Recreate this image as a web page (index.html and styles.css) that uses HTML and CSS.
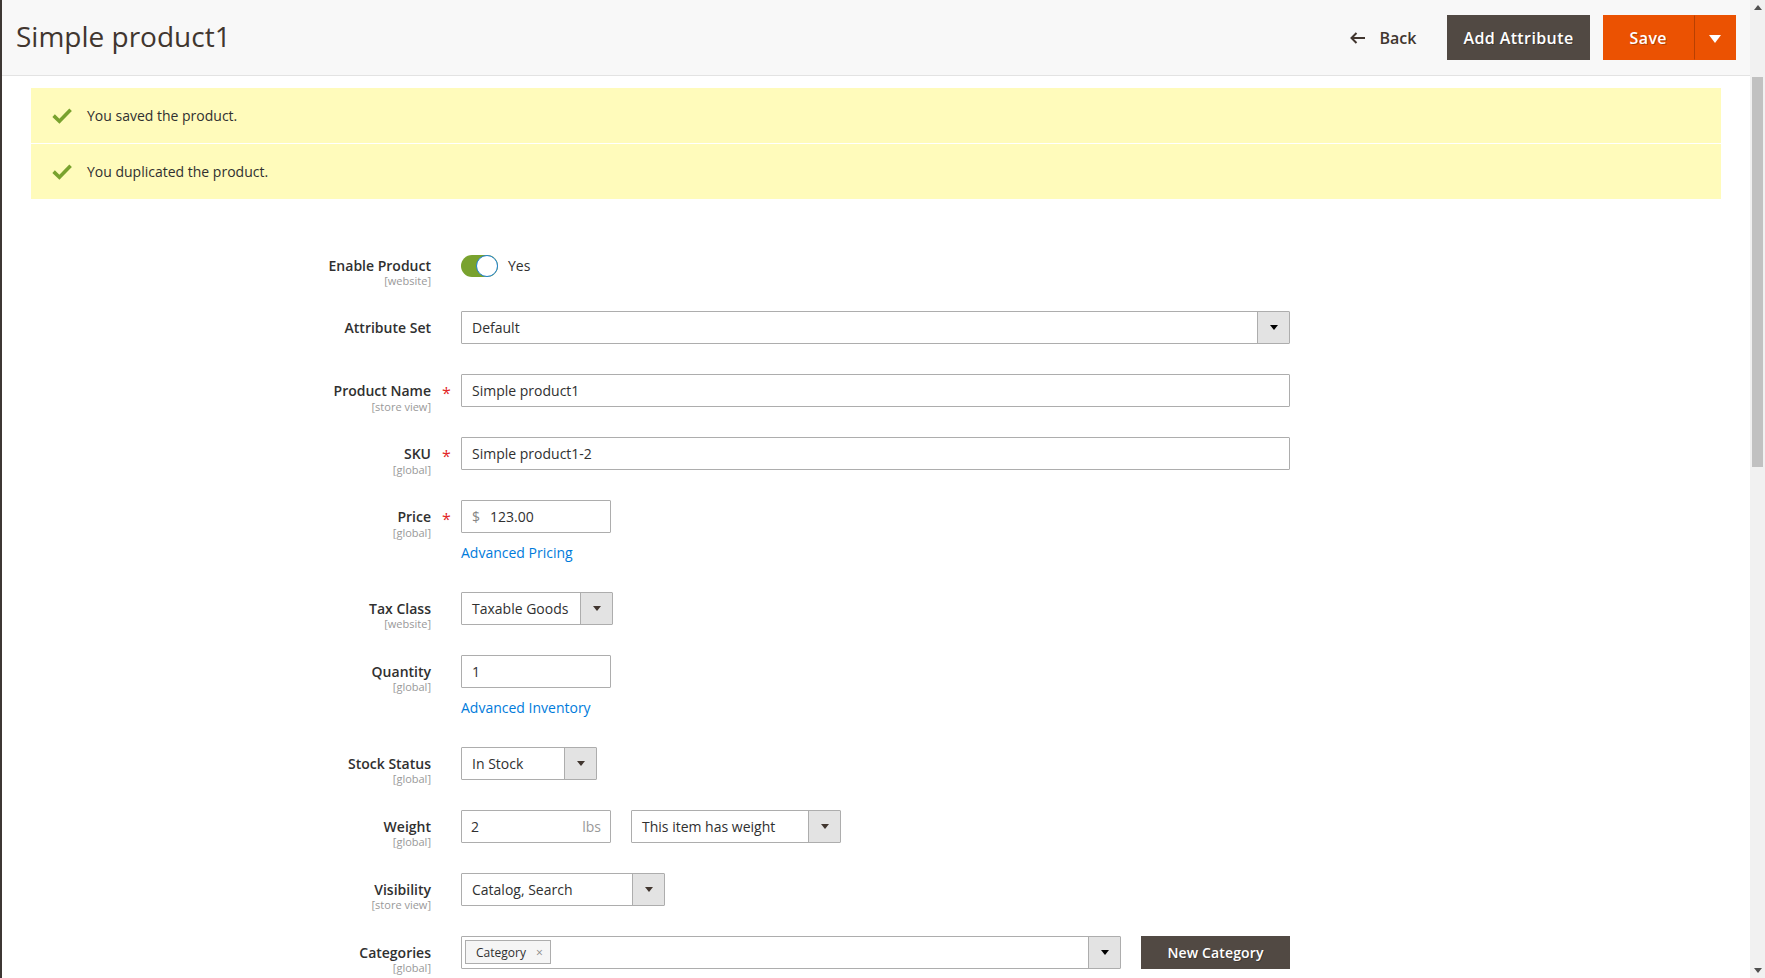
FILE: index.html
```html
<!DOCTYPE html>
<html lang="en">
<head>
<meta charset="utf-8">
<title>Simple product1 / Products / Catalog / Magento Admin</title>
<link rel="stylesheet" href="styles.css">
</head>
<body>
<div class="viewport">
  <div class="menu-edge"></div>
  <div class="page">
    <header class="page-actions">
      <h1 class="page-title">Simple product1</h1>
      <div class="page-actions-buttons">
        <a class="action-back" href="#">
          <svg class="back-arrow" width="16" height="12" viewBox="0 0 16 12"><path d="M6.5 1 L1.5 6 L6.5 11 M1.5 6 H15" fill="none" stroke="#41362f" stroke-width="2"/></svg>
          <span>Back</span>
        </a>
        <button class="btn btn-secondary" type="button">Add Attribute</button>
        <div class="split-button">
          <button class="btn btn-primary" type="button">Save</button>
          <button class="btn btn-primary btn-toggle" type="button" aria-label="Save options">
            <svg width="12" height="8" viewBox="0 0 12 8"><path d="M0 0 H12 L6 8 Z" fill="#fff"/></svg>
          </button>
        </div>
      </div>
    </header>

    <main class="content">
      <div class="messages">
        <div class="message">
          <svg class="check" width="20" height="16" viewBox="0 0 20 16"><path d="M1.6 7.6 L7.4 13.2 L18.6 1.8" fill="none" stroke="#79a22e" stroke-width="3.6"/></svg>
          <span>You saved the product.</span>
        </div>
        <div class="message">
          <svg class="check" width="20" height="16" viewBox="0 0 20 16"><path d="M1.6 7.6 L7.4 13.2 L18.6 1.8" fill="none" stroke="#79a22e" stroke-width="3.6"/></svg>
          <span>You duplicated the product.</span>
        </div>
      </div>

      <form class="product-form">
        <div class="field field-switch">
          <label class="field-label"><span class="label-text">Enable Product</span><span class="scope">[website]</span></label>
          <div class="control control-switch">
            <span class="switch"><span class="switch-knob"></span></span>
            <span class="switch-text">Yes</span>
          </div>
        </div>

        <div class="field">
          <label class="field-label"><span class="label-text">Attribute Set</span></label>
          <div class="control">
            <div class="select"><span class="select-value">Default</span><span class="select-btn"><svg width="8" height="5" viewBox="0 0 8 5"><path d="M0 0 H8 L4 5 Z" fill="#000"/></svg></span></div>
          </div>
        </div>

        <div class="field required">
          <label class="field-label"><span class="label-text">Product Name</span><span class="scope">[store view]</span></label>
          <div class="control">
            <input class="input" type="text" value="Simple product1">
          </div>
        </div>

        <div class="field required">
          <label class="field-label"><span class="label-text">SKU</span><span class="scope">[global]</span></label>
          <div class="control">
            <input class="input" type="text" value="Simple product1-2">
          </div>
        </div>

        <div class="field required">
          <label class="field-label"><span class="label-text">Price</span><span class="scope">[global]</span></label>
          <div class="control">
            <div class="addon w150"><span class="prefix">$</span><input class="addon-input" type="text" value="123.00"></div>
            <a class="field-link" href="#">Advanced Pricing</a>
          </div>
        </div>

        <div class="field">
          <label class="field-label"><span class="label-text">Tax Class</span><span class="scope">[website]</span></label>
          <div class="control">
            <div class="select w152"><span class="select-value">Taxable Goods</span><span class="select-btn"><svg width="8" height="5" viewBox="0 0 8 5"><path d="M0 0 H8 L4 5 Z" fill="#41362f"/></svg></span></div>
          </div>
        </div>

        <div class="field">
          <label class="field-label"><span class="label-text">Quantity</span><span class="scope">[global]</span></label>
          <div class="control">
            <input class="input w150" type="text" value="1">
            <a class="field-link" href="#">Advanced Inventory</a>
          </div>
        </div>

        <div class="field">
          <label class="field-label"><span class="label-text">Stock Status</span><span class="scope">[global]</span></label>
          <div class="control">
            <div class="select w136"><span class="select-value">In Stock</span><span class="select-btn"><svg width="8" height="5" viewBox="0 0 8 5"><path d="M0 0 H8 L4 5 Z" fill="#41362f"/></svg></span></div>
          </div>
        </div>

        <div class="field">
          <label class="field-label"><span class="label-text">Weight</span><span class="scope">[global]</span></label>
          <div class="control control-row">
            <div class="addon w150"><input class="addon-input addon-input-first" type="text" value="2"><span class="suffix">lbs</span></div>
            <div class="select w210"><span class="select-value">This item has weight</span><span class="select-btn"><svg width="8" height="5" viewBox="0 0 8 5"><path d="M0 0 H8 L4 5 Z" fill="#41362f"/></svg></span></div>
          </div>
        </div>

        <div class="field">
          <label class="field-label"><span class="label-text">Visibility</span><span class="scope">[store view]</span></label>
          <div class="control">
            <div class="select w204"><span class="select-value">Catalog, Search</span><span class="select-btn"><svg width="8" height="5" viewBox="0 0 8 5"><path d="M0 0 H8 L4 5 Z" fill="#41362f"/></svg></span></div>
          </div>
        </div>

        <div class="field">
          <label class="field-label"><span class="label-text">Categories</span><span class="scope">[global]</span></label>
          <div class="control control-row">
            <div class="select w660">
              <span class="select-tags"><span class="tag">Category<span class="tag-remove">×</span></span></span>
              <span class="select-btn"><svg width="8" height="5" viewBox="0 0 8 5"><path d="M0 0 H8 L4 5 Z" fill="#000"/></svg></span>
            </div>
            <button class="btn btn-secondary btn-small" type="button">New Category</button>
          </div>
        </div>
      </form>
    </main>
  </div>

  <div class="scrollbar" aria-hidden="true">
    <span class="sb-arrow"><svg width="8" height="5" viewBox="0 0 8 5"><path d="M0 5 H8 L4 0 Z" fill="#505050"/></svg></span>
    <div class="sb-track"><div class="sb-thumb"></div></div>
    <span class="sb-arrow"><svg width="8" height="5" viewBox="0 0 8 5"><path d="M0 0 H8 L4 5 Z" fill="#505050"/></svg></span>
  </div>
</div>
</body>
</html>
```

FILE: styles.css
```css
* { box-sizing: border-box; }

html, body {
  margin: 0;
  padding: 0;
}

body {
  font-family: "Open Sans", "Noto Sans", "Liberation Sans", sans-serif;
  font-size: 14px;
  color: #303030;
  background: #fff;
}

.viewport {
  display: flex;
  height: 100vh;
  overflow: hidden;
}

.menu-edge {
  width: 2px;
  flex: none;
  background: #3d3734;
}

.page {
  flex: 1;
  min-width: 0;
  overflow: hidden;
  display: flex;
  flex-direction: column;
}

/* fake browser scrollbar */
.scrollbar {
  width: 15px;
  flex: none;
  display: flex;
  flex-direction: column;
  background: #f1f1f1;
}

.sb-arrow {
  height: 15px;
  flex: none;
  display: flex;
  align-items: center;
  justify-content: center;
}

.sb-arrow svg { display: block; }

.sb-track {
  flex: 1;
  padding: 62px 2px 0;
}

.sb-thumb {
  height: 390px;
  background: #c1c1c1;
}

/* page actions header */
.page-actions {
  flex: none;
  height: 76px;
  display: flex;
  align-items: center;
  justify-content: space-between;
  padding: 0 14px;
  background: #f8f8f8;
  border-bottom: 1px solid #e3e3e3;
}

.page-title {
  margin: 0 0 3px;
  font-size: 28px;
  font-weight: 400;
  line-height: 34px;
  color: #41362f;
}

.page-actions-buttons {
  display: flex;
  align-items: center;
}

.action-back {
  display: flex;
  align-items: center;
  gap: 13px;
  margin-right: 31px;
  font-size: 16px;
  font-weight: 600;
  color: #41362f;
  text-decoration: none;
}

.back-arrow { display: block; }

.btn {
  font-family: inherit;
  font-size: 16px;
  font-weight: 600;
  letter-spacing: .025em;
  height: 45px;
  border: 1px solid transparent;
  border-radius: 0;
  color: #fff;
  cursor: pointer;
  text-shadow: 1px 1px 0 rgba(0, 0, 0, .25);
  padding: 0 15px;
  margin: 0;
}

.btn-secondary {
  background: #514943;
  border-color: #514943;
  margin-right: 13px;
}

.split-button {
  display: flex;
}

.btn-primary {
  background: #eb5202;
  border-color: #eb5202;
  padding: 0 26px;
}

.btn-toggle {
  width: 42px;
  padding: 0;
  display: flex;
  align-items: center;
  justify-content: center;
  border-left: 1px solid #b84002;
}

.btn-toggle svg { display: block; margin-top: 2px; }

.btn-small {
  width: 150px;
  height: 33px;
  font-size: 14px;
  letter-spacing: .01em;
  padding: 0;
  margin: 0;
}

/* content */
.content {
  padding: 0 29px;
}

.messages {
  margin-top: 12px;
}

.message {
  display: flex;
  align-items: center;
  gap: 15px;
  padding: 18px 40px 18px 21px;
  line-height: 19px;
  background: #fffbbb;
  color: #303030;
}

.message + .message {
  border-top: 1px solid #fff;
}

.check {
  display: block;
  flex: none;
  margin-top: 1px;
}

/* form */
.product-form {
  padding-top: 50px;
}

.field {
  display: grid;
  grid-template-columns: 400px 829px;
  column-gap: 30px;
  align-items: start;
  margin-bottom: 30px;
}

.field-switch {
  margin-bottom: 29px;
}

.field-label {
  display: block;
  text-align: right;
  padding-top: 7px;
  font-size: 14px;
  font-weight: 600;
  line-height: 19px;
  color: #303030;
}

.label-text {
  display: inline-block;
}

.required .label-text::after {
  content: "*";
  display: inline-block;
  width: 0;
  margin-left: 11px;
  margin-right: -11px;
  color: #e22626;
  font-size: 16px;
  font-weight: 500;
  line-height: 1;
  vertical-align: -3px;
}

.scope {
  display: block;
  font-size: 11px;
  font-weight: 400;
  line-height: 12px;
  color: #999;
  margin-top: 0;
  margin-bottom: -12px;
}

.control {
  display: flex;
  flex-direction: column;
  align-items: flex-start;
}

.control-row {
  flex-direction: row;
  align-items: center;
  gap: 20px;
}

.control-switch {
  flex-direction: row;
  align-items: center;
  height: 33px;
  gap: 10px;
}

.switch {
  width: 37px;
  height: 22px;
  border-radius: 11px;
  background: #79a22e;
  display: flex;
  justify-content: flex-end;
  margin-top: 1px;
}

.switch-knob {
  width: 22px;
  height: 22px;
  border-radius: 50%;
  background: #fff;
  border: 1.5px solid #1d7fd1;
}

.switch-text {
  font-size: 14px;
  color: #303030;
}

.input {
  font-family: inherit;
  font-size: 14px;
  color: #303030;
  width: 100%;
  height: 33px;
  padding: 0 10px;
  border: 1px solid #adadad;
  border-radius: 1px;
  background: #fff;
  outline: none;
}

.w150 { width: 150px; }

.addon {
  display: flex;
  align-items: center;
  height: 33px;
  border: 1px solid #adadad;
  border-radius: 1px;
  background: #fff;
}

.prefix {
  color: #858585;
  padding-left: 10px;
  margin-right: 10px;
}

.addon-input {
  flex: 1;
  min-width: 0;
  font-family: inherit;
  font-size: 14px;
  color: #303030;
  border: 0;
  height: 31px;
  padding: 0;
  background: transparent;
  outline: none;
}

.addon-input-first {
  padding-left: 9px;
}

.suffix {
  color: #999;
  padding-right: 9px;
  margin-top: -1px;
}

.field-link {
  margin-top: 11px;
  font-size: 14px;
  line-height: 18px;
  color: #007bdb;
  text-decoration: none;
}

.select {
  display: flex;
  height: 33px;
  width: 100%;
  border: 1px solid #adadad;
  border-radius: 1px;
  background: #fff;
}

.select.w152 { width: 152px; flex: none; }
.select.w136 { width: 136px; flex: none; }
.select.w204 { width: 204px; flex: none; }
.select.w210 { width: 210px; flex: none; }
.select.w660 { width: 660px; flex: none; }

.select-value {
  flex: 1;
  min-width: 0;
  display: flex;
  align-items: center;
  padding: 0 10px;
  white-space: nowrap;
  overflow: hidden;
  color: #303030;
}

.select-btn {
  width: 32px;
  flex: none;
  display: flex;
  align-items: center;
  justify-content: center;
  background: #e3e3e3;
  border-left: 1px solid #adadad;
}

.select-btn svg { display: block; }

.select-tags {
  flex: 1;
  display: flex;
  align-items: flex-start;
  padding: 3px 0 0 3px;
}

.tag {
  display: flex;
  align-items: center;
  height: 24px;
  padding: 0 7px 0 10px;
  border: 1px solid #adadad;
  background: #f5f5f5;
  font-size: 12px;
  color: #303030;
}

.tag-remove {
  margin-left: 10px;
  font-size: 12px;
  color: #8a8a8a;
}
```
